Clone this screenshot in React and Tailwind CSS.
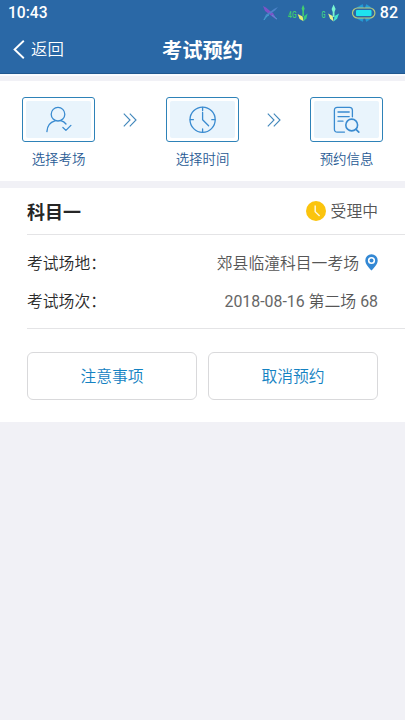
import React from "react";

const steps = [
  { label: "选择考场", icon: UserCheckIcon },
  { label: "选择时间", icon: ClockIcon },
  { label: "预约信息", icon: DocSearchIcon },
];

function UserCheckIcon() {
  return (
    <svg width="28" height="28" viewBox="0 0 28 28" fill="none" stroke="#3a8bd0" strokeWidth="1.3" strokeLinecap="round" strokeLinejoin="round">
      <circle cx="13" cy="8.2" r="6.8" />
      <path d="M1.9 25.6C2.2 19.5 5.6 16 9.9 14.8M15.8 14.7C18 15.3 19.8 16.5 21 18" />
      <path d="M17.9 21.5L20.9 24.4L25.9 19.4" />
    </svg>
  );
}

function ClockIcon() {
  return (
    <svg width="28" height="28" viewBox="0 0 28 28" fill="none" stroke="#3a8bd0" strokeWidth="1.3" strokeLinecap="round" strokeLinejoin="round">
      <circle cx="13.6" cy="13.7" r="12.6" />
      <path d="M13.6 1.3V4.6M13.6 22.9V26.1M1.2 13.7H4.4M22.8 13.7H26" />
      <path d="M13.6 6.5V13.7L19.6 19.7" />
    </svg>
  );
}

function DocSearchIcon() {
  return (
    <svg width="28" height="28" viewBox="0 0 28 28" fill="none" stroke="#3a8bd0" strokeWidth="1.3" strokeLinecap="round" strokeLinejoin="round">
      <path d="M11.5 26.1H4.3Q1.4 26.1 1.4 23.2V4.2Q1.4 1.3 4.3 1.3H16.5Q19.4 1.3 19.4 4.2V10.8" />
      <path d="M5 6H16.2M5 10.6H16.2M5 15.2H10" />
      <circle cx="18.7" cy="19" r="5.9" strokeWidth="1.6" />
      <path d="M23 23.4L25.8 26.2" strokeWidth="1.7" />
    </svg>
  );
}

function DoubleArrow() {
  return (
    <svg className="mt-[15.5px] mr-px shrink-0" width="14" height="14" viewBox="0 0 14 14" fill="none" stroke="#4187bb" strokeWidth="1.1">
      <path d="M0.8 0.7L7 7L0.8 13.3M6.8 0.7L13 7L6.8 13.3" />
    </svg>
  );
}

function StatusBar() {
  return (
    <div className="flex h-[25px] items-center justify-between pl-2 pr-[7px] text-[16px] leading-[25px] font-medium text-white">
      <span className="pt-px text-[15.6px]">10:43</span>
      <div className="flex items-center">
        <svg width="120" height="20" viewBox="0 0 120 20" fill="none">
          {/* crossed feathers */}
          <g transform="translate(6 0)">
            <path d="M1 3L4 4.5L8 8L11 10L15 17L10 13.5L7 11L3 8Z" fill="#8b50cc" opacity="0.85" />
            <path d="M16 4L13 7.5L10 9.5L5 13L1 17.5L4 11.5L8 9L12 6Z" fill="#4d83c9" />
            <path d="M2 17L5 13L7 12M10 12L15 16" stroke="#42b5d8" strokeWidth="0.8" />
          </g>
          {/* mobile signal */}
          <g transform="translate(5.6 0)">
            <text x="26.5" y="14.7" fontSize="8.5" fontWeight="500" fill="#42cd70" textLength="8.5" lengthAdjust="spacingAndGlyphs">4G</text>
            <path d="M41.5 1.8L43 5.5L42.3 8V13H40.8V8L40 5.5Z" fill="#42cd70" />
            <path d="M36 11L41 13.5L42 18.3L38 16Z" fill="#e8f070" />
            <path d="M46 10.5L42 13.5L42 18.3L44.8 15.5Z" fill="#35c97c" />
            <text x="60" y="14.7" fontSize="8.5" fontWeight="500" fill="#45d584" textLength="4" lengthAdjust="spacingAndGlyphs">G</text>
            <path d="M72 1.5L74 6L72.9 9V14H71.1V9L70 6Z" fill="#79f5d1" />
            <path d="M66.5 10.5L71 13L72 18.5L68.5 15.8Z" fill="#e6f58e" />
            <path d="M77.5 10.5L73 13L72 18.5L75.5 15.8Z" fill="#43e5cb" />
          </g>
          {/* battery */}
          <g transform="translate(3 0)">
            <path d="M97.5 5L103.5 1.6L104.3 5M106.2 5L107.5 1.6L112.5 5M97.5 15L103.5 18.4L104.3 15M106.2 15L107.5 18.4L112.5 15" fill="#24a0d8" stroke="#24a0d8" strokeWidth="0.6" />
            <rect x="93.5" y="5" width="22.4" height="10" rx="5" stroke="#b9c979" strokeWidth="1.2" />
            <rect x="97" y="7" width="15.5" height="6" rx="1" fill="#1ee3ef" />
          </g>
        </svg>
        <span className="ml-[4px]">82</span>
      </div>
    </div>
  );
}

function Header() {
  return (
    <header className="h-[74px] border-b border-[#20588f] bg-[#2a68a6] text-white shadow-[0_2px_0_#fafcff]">
      <StatusBar />
      <div className="grid h-[48px] grid-cols-3 items-center pt-px">
        <button className="flex items-center pl-[13px] text-left text-[16.4px] font-[350]">
          <svg width="12" height="19" viewBox="0 0 12 19" fill="none" stroke="white" strokeWidth="1.9">
            <path d="M10.8 0.8L1.6 9.5L10.8 18.2" />
          </svg>
          <span className="ml-[6px] pt-0.5">返回</span>
        </button>
        <h1 className="pt-[3px] text-center text-[20.2px] font-bold">考试预约</h1>
      </div>
    </header>
  );
}

function Steps() {
  return (
    <div className="flex h-[100px] items-start justify-between bg-white px-[22px] pt-4">
      {steps.map((step, index) => {
        const Icon = step.icon;
        return (
          <React.Fragment key={step.label}>
            {index > 0 && <DoubleArrow />}
            <div className="w-[73px] text-center">
              <div className="h-[45px] rounded-[3px] border border-[#2e82b8] p-[3px]">
                <div className="flex h-full items-center justify-center rounded-[2px] bg-[#e9f4fc]">
                  <Icon />
                </div>
              </div>
              <div className="mt-2 text-[13.4px] leading-5 font-[350] text-[#285a94]">
                {step.label}
              </div>
            </div>
          </React.Fragment>
        );
      })}
    </div>
  );
}

function Appointment() {
  return (
    <section className="h-[234px] bg-white pl-[27px] text-[15.8px]">
      <div className="flex h-[47px] items-center justify-between border-b border-[#e4e4e6] pr-[27px]">
        <h2 className="pt-0.5 text-[18px] font-bold text-[#262626]">科目一</h2>
        <div className="flex items-center gap-[5px] font-[350] text-[#565656]">
          <svg width="20" height="20" viewBox="0 0 20 20" fill="none">
            <circle cx="10" cy="10" r="10" fill="#fbc40d" />
            <path d="M9.2 4.4V10.7L13.6 15" stroke="#fff6d8" strokeWidth="1.5" />
          </svg>
          <span className="pt-0.5">受理中</span>
        </div>
      </div>
      <div className="flex h-[94px] flex-col border-b border-[#e4e4e6] pt-[10px] pr-[27px] font-[350]">
        <div className="flex h-[38px] items-center justify-between">
          <span className="text-[#2a2a2a]">考试场地：</span>
          <div className="flex items-center gap-[6px] text-[#565656]">
            <span>郊县临潼科目一考场</span>
            <svg className="-mt-1" width="13" height="17" viewBox="0 0 13 17">
              <path fill="#3388d4" fillRule="evenodd" d="M6.5 0.2A6.2 6.2 0 0 1 12.7 6.4C12.7 10 9.2 13.2 6.5 16.6C3.8 13.2 0.3 10 0.3 6.4A6.2 6.2 0 0 1 6.5 0.2ZM6.5 2.9A3.6 3.6 0 1 0 6.5 10.1A3.6 3.6 0 1 0 6.5 2.9Z" />
              <circle cx="6.5" cy="6.5" r="2" fill="#3388d4" />
            </svg>
          </div>
        </div>
        <div className="flex h-[38px] items-center justify-between">
          <span className="text-[#2a2a2a]">考试场次：</span>
          <span className="text-[15.9px] text-[#565656]">
            <span className="font-normal text-[#666666]">2018-08-16</span> 第二场{" "}
            <span className="font-normal text-[#666666]">68</span>
          </span>
        </div>
      </div>
      <div className="flex gap-[11px] pt-[23px] pr-[27px]">
        <button className="h-[48px] flex-1 rounded-[6px] border border-[#d9d9db] pt-0.5 font-[350] text-[#1482c2]">
          注意事项
        </button>
        <button className="h-[48px] flex-1 rounded-[6px] border border-[#d9d9db] pt-0.5 font-[350] text-[#1482c2]">
          取消预约
        </button>
      </div>
    </section>
  );
}

export default function App() {
  return (
    <div className="flex min-h-screen w-full flex-col gap-[7px] bg-[#f1f1f6] font-[Roboto,'Noto_Sans_CJK_SC',sans-serif]">
      <Header />
      <Steps />
      <Appointment />
    </div>
  );
}
